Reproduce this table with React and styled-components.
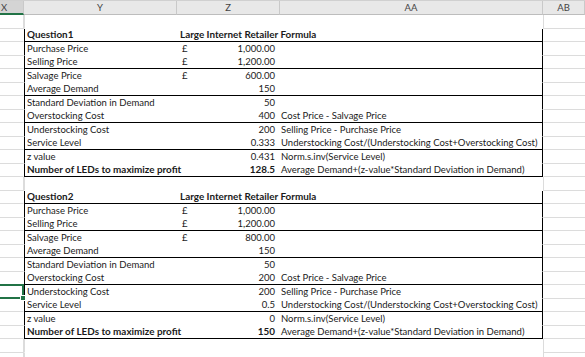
import React from "react";
import styled, { createGlobalStyle, css } from "styled-components";

const GlobalStyle = createGlobalStyle`
  html, body {
    margin: 0;
    padding: 0;
    background: #ffffff;
    overflow: hidden;
  }
  body {
    font-family: Lato, "Liberation Sans", sans-serif;
  }
`;

const COLS = "24px 153px 103px 263px 1fr";

const Sheet = styled.div`
  width: 585px;
  height: 357px;
  display: flex;
  flex-direction: column;
  overflow: hidden;
  background: #fff;
`;

const HeaderRow = styled.div`
  display: grid;
  grid-template-columns: ${COLS};
  height: 15px;
  flex: none;
  background: #e8e8e8;
  border-top: 1px solid #d0d0d0;
  box-sizing: border-box;
`;

const ColHead = styled.div`
  display: flex;
  align-items: center;
  justify-content: center;
  font-size: 9.5px;
  color: #444;
  border-right: 1px solid #c9c9c9;
  border-bottom: 1px solid #bdbdbd;
  box-sizing: border-box;
  overflow: hidden;
  ${(p) =>
    p.active &&
    css`
      background: #d4d4d4;
      border-bottom: 2px solid #217346;
      justify-content: flex-start;
      padding-left: 1px;
    `}
`;

const Row = styled.div`
  display: grid;
  grid-template-columns: ${COLS};
  height: 13.5px;
  flex: none;
  font-size: 9.5px;
  line-height: 11px;
  color: #1a1a1a;
`;

const cellBase = css`
  display: flex;
  align-items: flex-end;
  box-sizing: border-box;
  white-space: nowrap;
  padding-bottom: 1px;
  font-weight: ${(p) => (p.bold ? 700 : 400)};
  font-size: ${(p) => (p.bold ? "9.9px" : "9.5px")};
`;

const Gutter = styled.div`
  position: relative;
  border-bottom: 1px solid #dcdcdc;
  border-right: 1px solid ${(p) => (p.inTable ? "transparent" : "#dcdcdc")};
  ${(p) =>
    p.selected &&
    css`
      &::after {
        content: "";
        position: absolute;
        left: -4px;
        right: -1px;
        top: -1px;
        bottom: -1px;
        border: 2px solid #217346;
      }
      &::before {
        content: "";
        position: absolute;
        right: -3px;
        bottom: -3px;
        width: 4px;
        height: 4px;
        background: #217346;
        border: 1px solid #fff;
        z-index: 2;
      }
    `}
`;

const Label = styled.div`
  ${cellBase};
  padding-left: 2px;
  border-left: 1px solid ${(p) => (p.inTable ? "#000" : "#dcdcdc")};
  border-bottom: 1px solid ${(p) => (p.end ? "#000" : "transparent")};
`;

const Value = styled.div`
  ${cellBase};
  justify-content: ${(p) => (p.spill ? "flex-start" : "space-between")};
  padding-left: ${(p) => (p.spill ? "3px" : "5px")};
  padding-right: 5px;
  border-bottom: 1px solid ${(p) => (p.end ? "#000" : "transparent")};
  overflow: visible;
`;

const Currency = styled.span`
  font-weight: 400;
`;

const Amount = styled.span`
  margin-left: auto;
`;

const Formula = styled.div`
  ${cellBase};
  font-weight: 400;
  font-size: 9.5px;
  padding-left: 1px;
  border-right: 1px solid ${(p) => (p.inTable ? "#000" : "transparent")};
  border-bottom: 1px solid ${(p) => (p.end ? "#000" : "transparent")};
`;

const Spare = styled.div`
  border-bottom: 1px solid #dcdcdc;
  border-left: 1px solid ${(p) => (p.inTable ? "transparent" : "#dcdcdc")};
`;

const question1 = [
  { label: "Purchase Price", cur: true, value: "1,000.00" },
  { label: "Selling Price", cur: true, value: "1,200.00", end: true },
  { label: "Salvage Price", cur: true, value: "600.00" },
  { label: "Average Demand", value: "150", end: true },
  { label: "Standard Deviation in Demand", value: "50" },
  { label: "Overstocking Cost", value: "400", formula: "Cost Price - Salvage Price", end: true },
  { label: "Understocking Cost", value: "200", formula: "Selling Price - Purchase Price" },
  {
    label: "Service Level",
    value: "0.333",
    formula: "Understocking Cost/(Understocking Cost+Overstocking Cost)",
    end: true,
  },
  { label: "z value", value: "0.431", formula: "Norm.s.inv(Service Level)" },
  {
    label: "Number of LEDs to maximize profit",
    value: "128.5",
    formula: "Average Demand+(z-value*Standard Deviation in Demand)",
    bold: true,
    end: true,
  },
];

const question2 = [
  { label: "Purchase Price", cur: true, value: "1,000.00" },
  { label: "Selling Price", cur: true, value: "1,200.00", end: true },
  { label: "Salvage Price", cur: true, value: "800.00" },
  { label: "Average Demand", value: "150", end: true },
  { label: "Standard Deviation in Demand", value: "50" },
  { label: "Overstocking Cost", value: "200", formula: "Cost Price - Salvage Price", end: true },
  {
    label: "Understocking Cost",
    value: "200",
    formula: "Selling Price - Purchase Price",
    selected: true,
  },
  {
    label: "Service Level",
    value: "0.5",
    formula: "Understocking Cost/(Understocking Cost+Overstocking Cost)",
    end: true,
  },
  { label: "z value", value: "0", formula: "Norm.s.inv(Service Level)" },
  {
    label: "Number of LEDs to maximize profit",
    value: "150",
    formula: "Average Demand+(z-value*Standard Deviation in Demand)",
    bold: true,
    end: true,
  },
];

function BlankRow() {
  return (
    <Row>
      <Gutter />
      <Label />
      <Value />
      <Formula />
      <Spare />
    </Row>
  );
}

function Table({ title, rows }) {
  return (
    <>
      <Row>
        <Gutter inTable />
        <Label inTable end bold>
          {title}
        </Label>
        <Value end bold spill>
          Large Internet Retailer Formula
        </Value>
        <Formula inTable end />
        <Spare inTable />
      </Row>
      {rows.map((r) => (
        <Row key={r.label}>
          <Gutter inTable selected={r.selected} />
          <Label inTable end={r.end} bold={r.bold}>
            {r.label}
          </Label>
          <Value end={r.end} bold={r.bold}>
            {r.cur && <Currency>£</Currency>}
            <Amount>{r.value}</Amount>
          </Value>
          <Formula inTable end={r.end}>
            {r.formula}
          </Formula>
          <Spare inTable />
        </Row>
      ))}
    </>
  );
}

export default function App() {
  return (
    <>
      <GlobalStyle />
      <Sheet>
        <HeaderRow>
          <ColHead active>X</ColHead>
          <ColHead>Y</ColHead>
          <ColHead>Z</ColHead>
          <ColHead>AA</ColHead>
          <ColHead>AB</ColHead>
        </HeaderRow>
        <BlankRow />
        <Table title="Question1" rows={question1} />
        <BlankRow />
        <Table title="Question2" rows={question2} />
        <BlankRow />
        <BlankRow />
      </Sheet>
    </>
  );
}
